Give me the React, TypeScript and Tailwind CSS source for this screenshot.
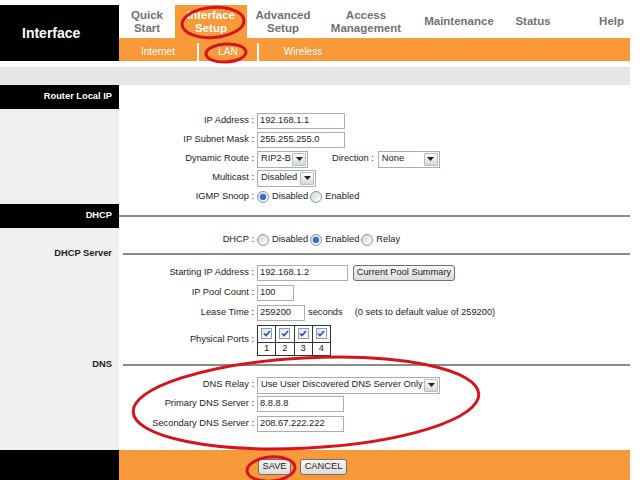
import React from "react";

const Input = ({ value, w }: { value: string; w: string }) => (
	<div className={`flex h-[16px] items-center whitespace-nowrap border border-[#a7aeb5] bg-white pl-[2px] ${w}`}>
		{value}
	</div>
);

const Select = ({ value, w }: { value: string; w: string }) => (
	<div className={`flex h-[17px] items-center border border-[#a7aeb5] bg-white ${w}`}>
		<span className="min-w-0 flex-1 overflow-hidden whitespace-nowrap pl-[3px]">{value}</span>
		<span className="mr-[1px] flex h-[13px] w-[14px] shrink-0 items-center justify-center rounded-[1px] border border-[#b8bcc2] bg-gradient-to-b from-white to-[#d8d8d8]">
			<svg width="7" height="4" viewBox="0 0 7 4">
				<path d="M0 0h7L3.5 4z" fill="#222" />
			</svg>
		</span>
	</div>
);

const Radio = ({ on }: { on?: boolean }) => (
	<span className="flex h-[12px] w-[12px] shrink-0 items-center justify-center rounded-full border border-[#8d99a6] bg-gradient-to-br from-[#d6d6d6] to-white">
		{on && <span className="h-[6px] w-[6px] rounded-full bg-[#2f6fd0] shadow-[0_0_1px_#5aa0ff]" />}
	</span>
);

const Check = () => (
	<span className="flex h-[11px] w-[11px] items-center justify-center border border-[#8a9cb8] bg-gradient-to-br from-[#dfe5ee] to-white">
		<svg width="8" height="7" viewBox="0 0 8 7">
			<path d="M1 3.5l2 2L7 1" stroke="#2b4fa6" strokeWidth="1.6" fill="none" />
		</svg>
	</span>
);

const Button = ({ text, w }: { text: string; w: string }) => (
	<div className={`flex h-[16px] items-center justify-center whitespace-nowrap rounded-[3px] border border-[#707070] bg-gradient-to-b from-[#f6f6f6] to-[#dcdcdc] ${w}`}>
		{text}
	</div>
);

const Row = ({ label, h, children }: { label: string; h: string; children?: React.ReactNode }) => (
	<div className={`flex ${h}`}>
		<div className="w-[119px] bg-[#efefef]" />
		<div className="flex flex-1 items-center pt-[3px]">
			<div className="w-[135px] whitespace-nowrap text-right">{label} :</div>
			<div className="flex items-center whitespace-nowrap pl-[3px]">{children}</div>
		</div>
	</div>
);

const LineRow = ({ label, h, dark }: { label: string; h: string; dark?: boolean }) => (
	<div className={`flex ${h}`}>
		<div
			className={`flex w-[119px] items-center justify-end pr-[7px] font-bold ${dark ? "bg-black text-white" : "bg-[#efefef] text-[#222]"}`}
		>
			{label}
		</div>
		<div className="flex flex-1 items-center">
			<div className={`h-[2px] w-full bg-[#8a8a8a] ${dark ? "" : "ml-[4px]"}`} />
		</div>
	</div>
);

const Tab = ({ w, children, active, right }: { w: string; children: React.ReactNode; active?: boolean; right?: boolean }) => (
	<div
		className={`flex ${w} items-center ${right ? "justify-end pr-[6px]" : "justify-center"} text-center text-[11.5px] font-bold leading-[13px] ${active ? "bg-[#f8993a] text-white" : "text-[#727272]"}`}
	>
		{children}
	</div>
);

export default function App() {
	return (
		<div className="relative h-[480px] w-[640px] overflow-hidden bg-white font-['Liberation_Sans',Arial,sans-serif] text-[9.3px] text-[#222]">
			<div className="w-[630px]">
				{/* Header ------------------------------------------------ */}
				<div className="h-[5px]" />
				<div className="flex h-[56px]">
					<div className="flex w-[119px] items-center bg-black pl-[22px] text-[14px] font-bold text-white">
						Interface
					</div>
					<div className="flex flex-1 flex-col">
						<div className="flex h-[33px]">
							<Tab w="w-[56px]">
								Quick
								<br />
								Start
							</Tab>
							<Tab w="w-[72px]" active>
								Interface
								<br />
								Setup
							</Tab>
							<Tab w="w-[72px]">
								Advanced
								<br />
								Setup
							</Tab>
							<Tab w="w-[94px]">
								Access
								<br />
								Management
							</Tab>
							<Tab w="w-[92px]">Maintenance</Tab>
							<Tab w="w-[56px]">Status</Tab>
							<Tab w="flex-1" right>
								Help
							</Tab>
						</div>
						<div className="flex h-[23px] bg-[#f8993a] text-[10px] text-white">
							<div className="flex w-[78px] items-center justify-center pt-[3px]">Internet</div>
							<div className="h-[18px] w-[2px] self-end bg-white" />
							<div className="flex w-[58px] items-center justify-center pt-[3px]">LAN</div>
							<div className="h-[18px] w-[2px] self-end bg-white" />
							<div className="flex w-[88px] items-center justify-center pt-[3px]">Wireless</div>
						</div>
					</div>
				</div>
				<div className="h-[6px]" />
				<div className="h-[18px] bg-[#e6e6e6]" />

				{/* Router Local IP ---------------------------------------- */}
				<div className="flex h-[24px]">
					<div className="flex w-[119px] items-center justify-end bg-black pr-[7px] font-bold text-white">
						Router Local IP
					</div>
				</div>
				<div className="flex h-[1px]">
					<div className="w-[119px] bg-[#efefef]" />
				</div>
				<Row label="IP Address" h="h-[19px]">
					<Input value="192.168.1.1" w="w-[88px]" />
				</Row>
				<Row label="IP Subnet Mask" h="h-[19px]">
					<Input value="255.255.255.0" w="w-[88px]" />
				</Row>
				<Row label="Dynamic Route" h="h-[19px]">
					<Select value="RIP2-B" w="w-[51px]" />
					<span className="ml-[24px] mr-[4px]">Direction :</span>
					<Select value="None" w="w-[62px]" />
				</Row>
				<Row label="Multicast" h="h-[19px]">
					<Select value="Disabled" w="w-[59px]" />
				</Row>
				<Row label="IGMP Snoop" h="h-[18px]">
					<Radio on />
					<span className="ml-[3px] mr-[2px]">Disabled</span>
					<Radio />
					<span className="ml-[3px]">Enabled</span>
				</Row>

				{/* DHCP ---------------------------------------------------- */}
				<LineRow label="DHCP" h="h-[24px]" dark />
				<Row label="DHCP" h="h-[20px]">
					<Radio />
					<span className="ml-[3px] mr-[2px]">Disabled</span>
					<Radio on />
					<span className="ml-[3px] mr-[2px]">Enabled</span>
					<Radio />
					<span className="ml-[3px]">Relay</span>
				</Row>
				<LineRow label="DHCP Server" h="h-[12px]" />
				<Row label="Starting IP Address" h="h-[22px]">
					<Input value="192.168.1.2" w="w-[91px]" />
					<span className="ml-[5px]">
						<Button text="Current Pool Summary" w="w-[102px]" />
					</span>
				</Row>
				<Row label="IP Pool Count" h="h-[19px]">
					<Input value="100" w="w-[37px]" />
				</Row>
				<Row label="Lease Time" h="h-[20px]">
					<Input value="259200" w="w-[48px]" />
					<span className="ml-[3px]">seconds</span>
					<span className="ml-[12px]">(0 sets to default value of 259200)</span>
				</Row>
				<Row label="Physical Ports" h="h-[35px]">
					<div className="grid w-[74px] grid-cols-4 gap-[1px] border border-[#333] bg-[#333]">
						{[1, 2, 3, 4].map((n) => (
							<div key={"c" + n} className="flex h-[16px] items-center justify-center bg-white">
								<Check />
							</div>
						))}
						{[1, 2, 3, 4].map((n) => (
							<div key={"n" + n} className="flex h-[12px] items-center justify-center bg-white">
								{n}
							</div>
						))}
					</div>
				</Row>

				{/* DNS ------------------------------------------------------ */}
				<LineRow label="DNS" h="h-[18px]" />
				<Row label="DNS Relay" h="h-[19px]">
					<Select value="Use User Discovered DNS Server Only" w="w-[183px]" />
				</Row>
				<Row label="Primary DNS Server" h="h-[19px]">
					<Input value="8.8.8.8" w="w-[87px]" />
				</Row>
				<Row label="Secondary DNS Server" h="h-[20px]">
					<Input value="208.67.222.222" w="w-[87px]" />
				</Row>
				<div className="flex h-[18px]">
					<div className="w-[119px] bg-[#efefef]" />
				</div>

				{/* Footer --------------------------------------------------- */}
				<div className="flex h-[30px]">
					<div className="w-[119px] bg-black" />
					<div className="flex flex-1 items-center bg-[#f8993a] pl-[139px] pt-[3px]">
						<Button text="SAVE" w="w-[33px]" />
						<span className="ml-[9px]">
							<Button text="CANCEL" w="w-[47px]" />
						</span>
					</div>
				</div>
			</div>

			{/* red annotation marks */}
			<svg className="pointer-events-none absolute left-0 top-0" width="640" height="480" viewBox="0 0 640 480">
				<g fill="none" stroke="#d8121e" strokeWidth="3">
					<ellipse cx="213" cy="22.5" rx="31" ry="15" transform="rotate(-4 213 22.5)" />
					<ellipse cx="226" cy="53" rx="20" ry="9" transform="rotate(-3 226 53)" />
					<ellipse cx="306" cy="403" rx="173" ry="45" transform="rotate(-3 306 403)" />
					<ellipse cx="271" cy="469" rx="24" ry="12" transform="rotate(-5 271 469)" />
				</g>
			</svg>
		</div>
	);
}
